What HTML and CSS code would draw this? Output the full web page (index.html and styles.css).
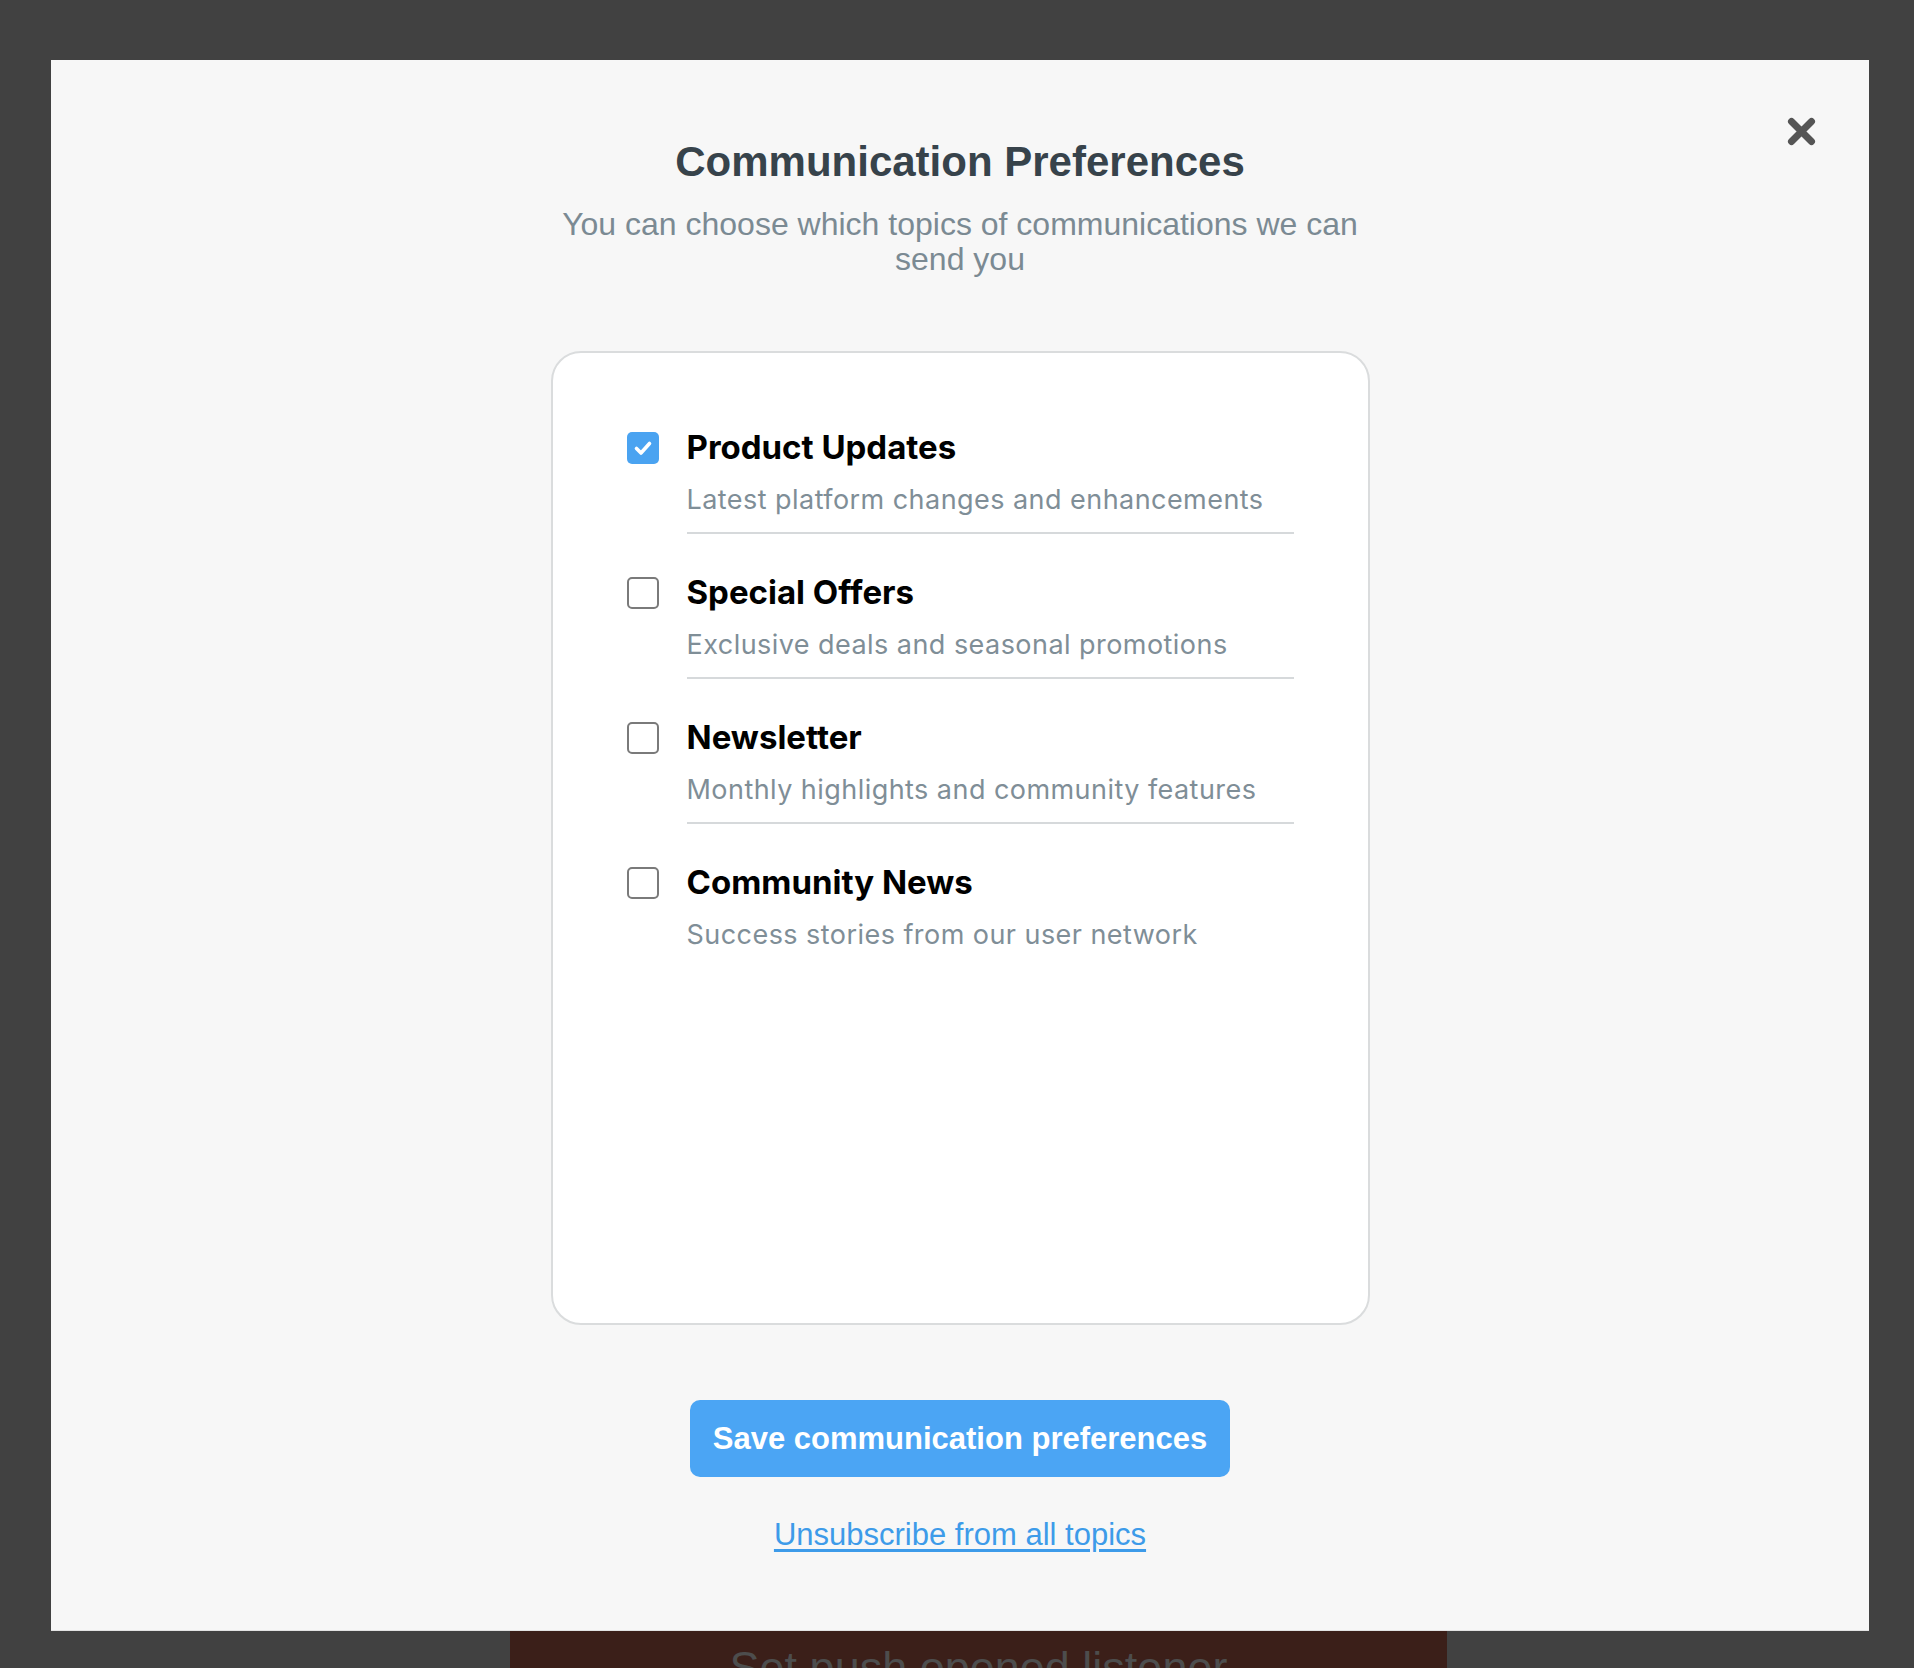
FILE: index.html
```html
<!DOCTYPE html>
<html lang="en">
<head>
  <meta charset="UTF-8">
  <meta name="viewport" content="width=device-width, initial-scale=1.0">
  <title>Communication Preferences</title>
  <link rel="stylesheet" href="styles.css">
</head>
<body>
  <div class="modal">
    <button class="close" aria-label="Close">
      <svg width="29" height="29" viewBox="0 0 29 29"><path d="M4.5 4.5 L24.5 24.5 M24.5 4.5 L4.5 24.5" stroke="#555" stroke-width="7" stroke-linecap="round" fill="none"/></svg>
    </button>
    <h1 class="title">Communication Preferences</h1>
    <p class="subtitle">You can choose which topics of communications we can send you</p>

    <div class="card">
      <!-- Topic 1 -->
      <div class="topic">
        <span class="box checked">
          <svg width="32" height="32" viewBox="0 0 32 32"><path d="M9.5 16.5 L14 21 L22.5 11.5" stroke="#fff" stroke-width="3.6" stroke-linecap="round" stroke-linejoin="round" fill="none"/></svg>
        </span>
        <div class="topic-text">
          <div class="topic-label">Product Updates</div>
          <div class="topic-desc">Latest platform changes and enhancements</div>
        </div>
      </div>
      <!-- Topic 2 -->
      <div class="topic">
        <span class="box"></span>
        <div class="topic-text">
          <div class="topic-label">Special Offers</div>
          <div class="topic-desc">Exclusive deals and seasonal promotions</div>
        </div>
      </div>
      <!-- Topic 3 -->
      <div class="topic">
        <span class="box"></span>
        <div class="topic-text">
          <div class="topic-label">Newsletter</div>
          <div class="topic-desc">Monthly highlights and community features</div>
        </div>
      </div>
      <!-- Topic 4 -->
      <div class="topic">
        <span class="box"></span>
        <div class="topic-text">
          <div class="topic-label">Community News</div>
          <div class="topic-desc">Success stories from our user network</div>
        </div>
      </div>
    </div>

    <button class="save">Save communication preferences</button>
    <a class="unsub" href="#">Unsubscribe from all topics</a>
  </div>
  <div class="behind">Set push opened listener</div>
</body>
</html>
```

FILE: styles.css
```css
html, body { margin:0; padding:0; height:100%; overflow:hidden; }
body { background:#414141; padding:60px 45px 0 51px; box-sizing:border-box; font-family:"Liberation Sans",Arial,sans-serif; }

.modal { position:relative; height:1571px; box-sizing:border-box; background:#f7f7f7; border-bottom:1px solid #e2e2e2; display:flex; flex-direction:column; align-items:center; padding-top:76.5px; }
.close { position:absolute; top:57px; right:53px; width:29px; height:29px; padding:0; border:none; background:none; cursor:pointer; }
.close svg { display:block; }

.title { margin:0; font-size:42px; line-height:1.2; font-weight:bold; color:#37434b; }
.subtitle { margin:20.5px 0 0; width:820px; text-align:center; font-size:32px; line-height:35px; color:#7b8a93; }

.card { margin-top:74px; width:819px; height:974px; box-sizing:border-box; background:#fff; border:2px solid #dadcdd; border-radius:30px; padding:76px 74px; }
.topic { display:flex; gap:28px; }
.topic + .topic { margin-top:40.5px; }
.box { flex:none; width:32px; height:32px; margin-top:3px; box-sizing:border-box; border:2px solid #7a7a7a; border-radius:5px; background:#fff; }
.box.checked { border:none; background:#4aa3f1; }
.box svg { display:block; }
.topic-text { flex:1; padding-bottom:16px; border-bottom:2px solid #d6d9db; }
.topic:last-child .topic-text { border-bottom:none; }
.topic-label { font-family:Inter,"Noto Sans",sans-serif; font-weight:700; font-size:33px; line-height:36px; color:#000; }
.topic-desc { margin-top:18.5px; font-family:Inter,"Noto Sans",sans-serif; font-size:27px; line-height:32px; letter-spacing:0.45px; color:#7f8e97; }

.save { margin-top:75px; height:77px; padding:0 23px; border:none; border-radius:10px; background:#4ba5f4; color:#fff; font-family:"Liberation Sans",Arial,sans-serif; font-size:31px; font-weight:bold; cursor:pointer; }
.unsub { margin-top:40px; font-size:31px; line-height:36px; color:#3d9be9; text-decoration:underline; text-underline-offset:4px; }

.behind { width:937px; margin-left:459px; height:60px; box-sizing:border-box; padding-top:10px; background:#3b1f19; color:#4d4d4d; text-align:center; font-size:45px; line-height:1.2; }
```
